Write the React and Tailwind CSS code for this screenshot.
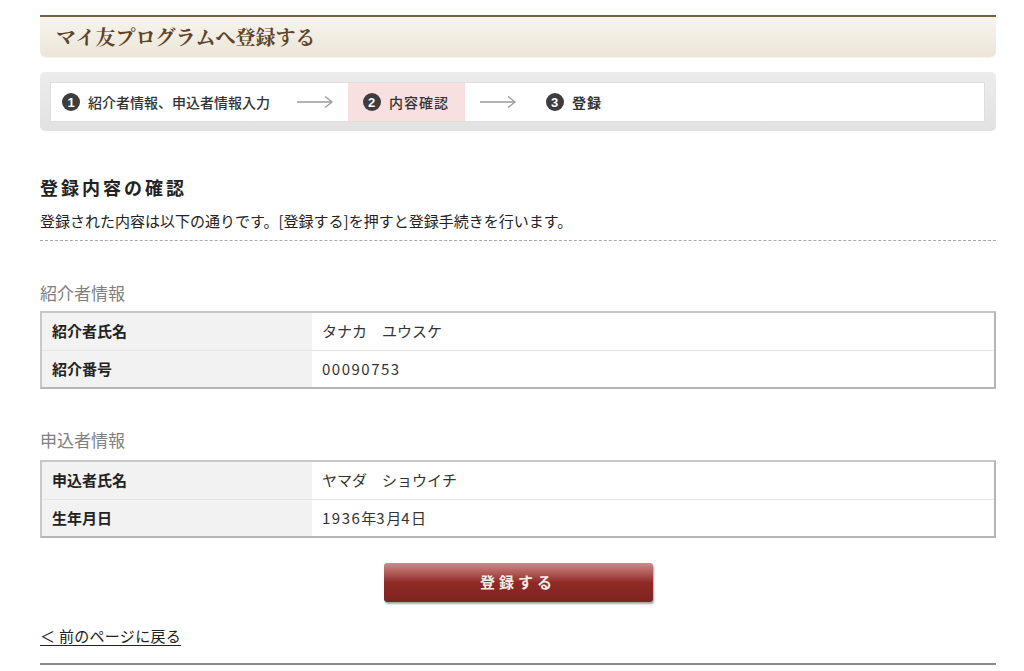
import React from "react";

const font = { fontFamily: '"Noto Sans CJK JP", "Noto Sans", sans-serif' };

function Num({ n }) {
  return (
    <span className="inline-flex items-center justify-center w-[18px] h-[18px] rounded-full bg-[#3d3d3d] text-white text-[13px] font-bold leading-none" style={{ fontFamily: '"Liberation Sans", sans-serif' }}>
      {n}
    </span>
  );
}

function Arrow() {
  return (
    <svg width="38" height="14" viewBox="0 0 38 14" className="shrink-0">
      <line x1="1" y1="7" x2="36" y2="7" stroke="#9a9a9a" strokeWidth="1.3" />
      <polyline points="29,1.5 36,7 29,12.5" fill="none" stroke="#9a9a9a" strokeWidth="1.3" />
    </svg>
  );
}

function Val({ text }) {
  const parts = text.split(/(\d+)/).filter((p) => p !== "");
  return (
    <span>
      {parts.map((p, i) =>
        /^\d+$/.test(p) ? (
          <span key={i} className="tracking-[1.5px]">{p}</span>
        ) : (
          <span key={i}>{p}</span>
        )
      )}
    </span>
  );
}

function Table({ rows }) {
  return (
    <div className="border-2 border-[#b5b5b5] border-l-[#c8c8c8] border-t-[#c8c8c8]">
      {rows.map(([k, v], i) => (
        <div key={i} className={"flex h-[37px] " + (i > 0 ? "border-t border-[#e6e6e6]" : "")}>
          <div className="w-[270px] bg-[#f2f2f2] flex items-center pl-[10px] text-[15px] font-bold text-[#222]">{k}</div>
          <div className="flex-1 bg-white flex items-center pl-[10px] text-[15px] text-[#333]">
            <Val text={v} />
          </div>
        </div>
      ))}
    </div>
  );
}

export default function App() {
  return (
    <div className="bg-white w-[1024px] h-[671px] overflow-hidden" style={font}>
      <div className="ml-[40px] w-[956px] pt-[15px]">
        {/* Header */}
        <div className="h-[2px] bg-[#7b5d3c]" />
        <div className="h-[40px] rounded-b-[6px] bg-gradient-to-b from-[#f6f4ee] to-[#ece6d8] flex items-center pl-[16px] shadow-[0_1px_1px_rgba(0,0,0,0.05)]">
          <span className="text-[20px] text-[#5e4328] font-bold" style={{ fontFamily: '"Noto Serif CJK JP", "Noto Sans CJK JP", serif' }}>
            マイ友プログラムへ登録する
          </span>
        </div>

        {/* Steps */}
        <div className="mt-[15px] h-[59px] rounded-[5px] bg-gradient-to-b from-[#ececec] to-[#e2e2e2] pl-[10px] pr-[11px] pt-[10px] pb-[9px]">
          <div className="h-[40px] bg-white border border-[#dedede] flex items-stretch">
            <div className="flex items-center gap-[8px] pl-[11px] text-[14px] font-medium text-[#333]">
              <Num n="1" />
              <span>紹介者情報、申込者情報入力</span>
            </div>
            <div className="flex items-center pl-[26px] pr-[14px]">
              <Arrow />
            </div>
            <div className="flex items-center gap-[8px] w-[117px] pl-[15px] bg-[#f8e0e0] text-[14px] font-medium text-[#333] tracking-[1px]">
              <Num n="2" />
              <span>内容確認</span>
            </div>
            <div className="flex items-center pl-[14px] pr-[29px]">
              <Arrow />
            </div>
            <div className="flex items-center gap-[8px] text-[14px] font-bold text-[#333] tracking-[1px]">
              <Num n="3" />
              <span>登録</span>
            </div>
          </div>
        </div>

        {/* Heading */}
        <h2 className="mt-[44px] text-[18px] leading-[24px] font-bold text-[#222] tracking-[3px]">登録内容の確認</h2>
        <p className="mt-[12px] text-[15px] leading-[20px] text-[#222]">
          登録された内容は以下の通りです。[登録する]を押すと登録手続きを行います。
        </p>
        <div className="mt-[9px] border-t border-dashed border-[#aaaaaa]" />

        {/* Section 1 */}
        <h3 className="mt-[41px] text-[17px] leading-[22px] text-[#808080]">紹介者情報</h3>
        <div className="mt-[7px]">
          <Table rows={[["紹介者氏名", "タナカ　ユウスケ"], ["紹介番号", "00090753"]]} />
        </div>

        {/* Section 2 */}
        <h3 className="mt-[40px] text-[17px] leading-[22px] text-[#808080]">申込者情報</h3>
        <div className="mt-[9px]">
          <Table rows={[["申込者氏名", "ヤマダ　ショウイチ"], ["生年月日", "1936年3月4日"]]} />
        </div>

        {/* Button */}
        <div className="mt-[25px] flex justify-center">
          <button className="w-[269px] h-[39px] rounded-[3px] bg-gradient-to-b from-[#d08a8c] via-[#8e2a26] to-[#7e231f] text-[#f3ece6] text-[15px] font-bold tracking-[4px] shadow-[1px_2px_2px_rgba(0,0,0,0.35)]">
            登録する
          </button>
        </div>

        {/* Back link */}
        <div className="mt-[24px] text-[15px] leading-[20px] text-[#222] tracking-[0.3px]">
          <a className="underline underline-offset-[3px]">＜ 前のページに戻る</a>
        </div>

        <div className="mt-[17px] h-[2px] bg-[#8a8a8a]" />
      </div>
    </div>
  );
}
